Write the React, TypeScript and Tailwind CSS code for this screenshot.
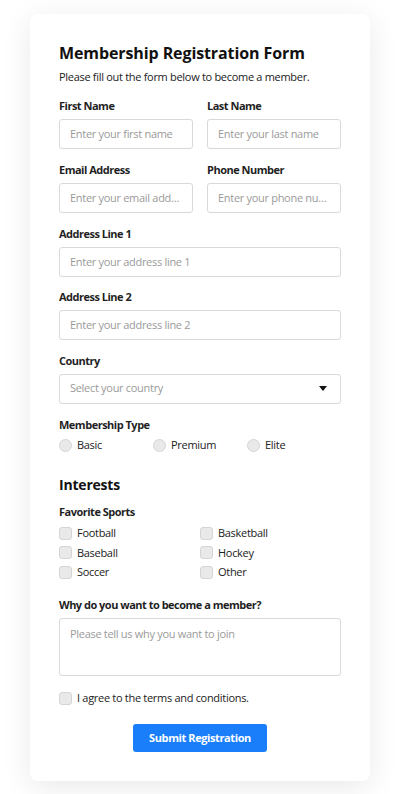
import React from "react";

const font = { fontFamily: '"Open Sans", "Noto Sans", sans-serif' };

function Label({ children }: { children: React.ReactNode }) {
  return (
    <div className="text-[11px] leading-[16px] font-bold tracking-[-0.5px] text-[#1f1f1f] mb-[5px]">{children}</div>
  );
}

function Input({ placeholder }: { placeholder: string }) {
  return (
    <div className="h-[30px] border border-[#d9d9d9] rounded-[3px] px-[10px] text-[11px] leading-[28px] tracking-[-0.3px] text-[#9a9a9a] truncate">
      {placeholder}
    </div>
  );
}

function Radio({ label }: { label: string }) {
  return (
    <div className="flex items-center h-[16px]">
      <span className="w-[13px] h-[13px] rounded-full bg-[#e9e9e9] border border-[#d5d5d5] shrink-0" />
      <span className="ml-[5px] text-[11px] tracking-[-0.3px] text-[#222]">{label}</span>
    </div>
  );
}

function Check({ label }: { label: string }) {
  return (
    <div className="flex items-center h-[19.5px]">
      <span className="w-[13px] h-[13px] rounded-[3px] bg-[#e9e9e9] border border-[#d5d5d5] shrink-0" />
      <span className="ml-[5px] text-[11px] tracking-[-0.3px] text-[#222]">{label}</span>
    </div>
  );
}

export default function App() {
  return (
    <div className="min-h-[794px] bg-white pt-[14px] pb-[14px]" style={font}>
      <div className="mx-auto w-[340px] bg-white rounded-[8px] shadow-[0_6px_30px_rgba(0,0,0,0.09)] p-[29px]">
        <h1 className="text-[16px] leading-[20px] font-bold tracking-[-0.1px] text-[#111]">Membership Registration Form</h1>
        <p className="mt-[6px] text-[11px] leading-[16px] tracking-[-0.3px] text-[#222]">Please fill out the form below to become a member.</p>

        <div className="mt-[13px] grid grid-cols-2 gap-x-[14px] gap-y-[13px]">
          <div className="min-w-0">
            <Label>First Name</Label>
            <Input placeholder="Enter your first name" />
          </div>
          <div className="min-w-0">
            <Label>Last Name</Label>
            <Input placeholder="Enter your last name" />
          </div>
          <div className="min-w-0">
            <Label>Email Address</Label>
            <Input placeholder="Enter your email address" />
          </div>
          <div className="min-w-0">
            <Label>Phone Number</Label>
            <Input placeholder="Enter your phone number" />
          </div>
        </div>

        <div className="mt-[12.5px]">
          <Label>Address Line 1</Label>
          <Input placeholder="Enter your address line 1" />
        </div>
        <div className="mt-[12.5px]">
          <Label>Address Line 2</Label>
          <Input placeholder="Enter your address line 2" />
        </div>
        <div className="mt-[12.5px]">
          <Label>Country</Label>
          <div className="h-[30px] border border-[#d9d9d9] rounded-[3px] flex items-center justify-between pl-[10px] pr-[13px] text-[11px] tracking-[-0.3px] text-[#9a9a9a]">
            <span>Select your country</span>
            <svg width="8" height="5" viewBox="0 0 8 5">
              <path d="M0 0 L8 0 L4 5 Z" fill="#111" />
            </svg>
          </div>
        </div>

        <div className="mt-[13px]">
          <Label>Membership Type</Label>
          <div className="grid grid-cols-3">
            <Radio label="Basic" />
            <Radio label="Premium" />
            <Radio label="Elite" />
          </div>
        </div>

        <h2 className="mt-[22px] text-[14px] leading-[18px] font-bold tracking-[-0.2px] text-[#111]">Interests</h2>
        <div className="mt-[10px] text-[11px] leading-[16px] font-bold tracking-[-0.5px] text-[#1f1f1f]">Favorite Sports</div>
        <div className="mt-[4px] grid grid-cols-2">
          <Check label="Football" />
          <Check label="Basketball" />
          <Check label="Baseball" />
          <Check label="Hockey" />
          <Check label="Soccer" />
          <Check label="Other" />
        </div>

        <div className="mt-[15px]">
          <Label>Why do you want to become a member?</Label>
          <div className="h-[58px] border border-[#d9d9d9] rounded-[3px] px-[10px] pt-[7px] text-[11px] leading-[16px] tracking-[-0.3px] text-[#9a9a9a]">
            Please tell us why you want to join
          </div>
        </div>

        <div className="mt-[14px] flex items-center h-[16px]">
          <span className="w-[13px] h-[13px] rounded-[3px] bg-[#e9e9e9] border border-[#d5d5d5] shrink-0" />
          <span className="ml-[5px] text-[11px] tracking-[-0.3px] text-[#222]">I agree to the terms and conditions.</span>
        </div>

        <div className="mt-[18px] flex justify-center">
          <button className="w-[134px] h-[28px] rounded-[3px] bg-[#1a7efb] text-white text-[11px] font-bold tracking-[-0.4px]">
            Submit Registration
          </button>
        </div>
      </div>
    </div>
  );
}
